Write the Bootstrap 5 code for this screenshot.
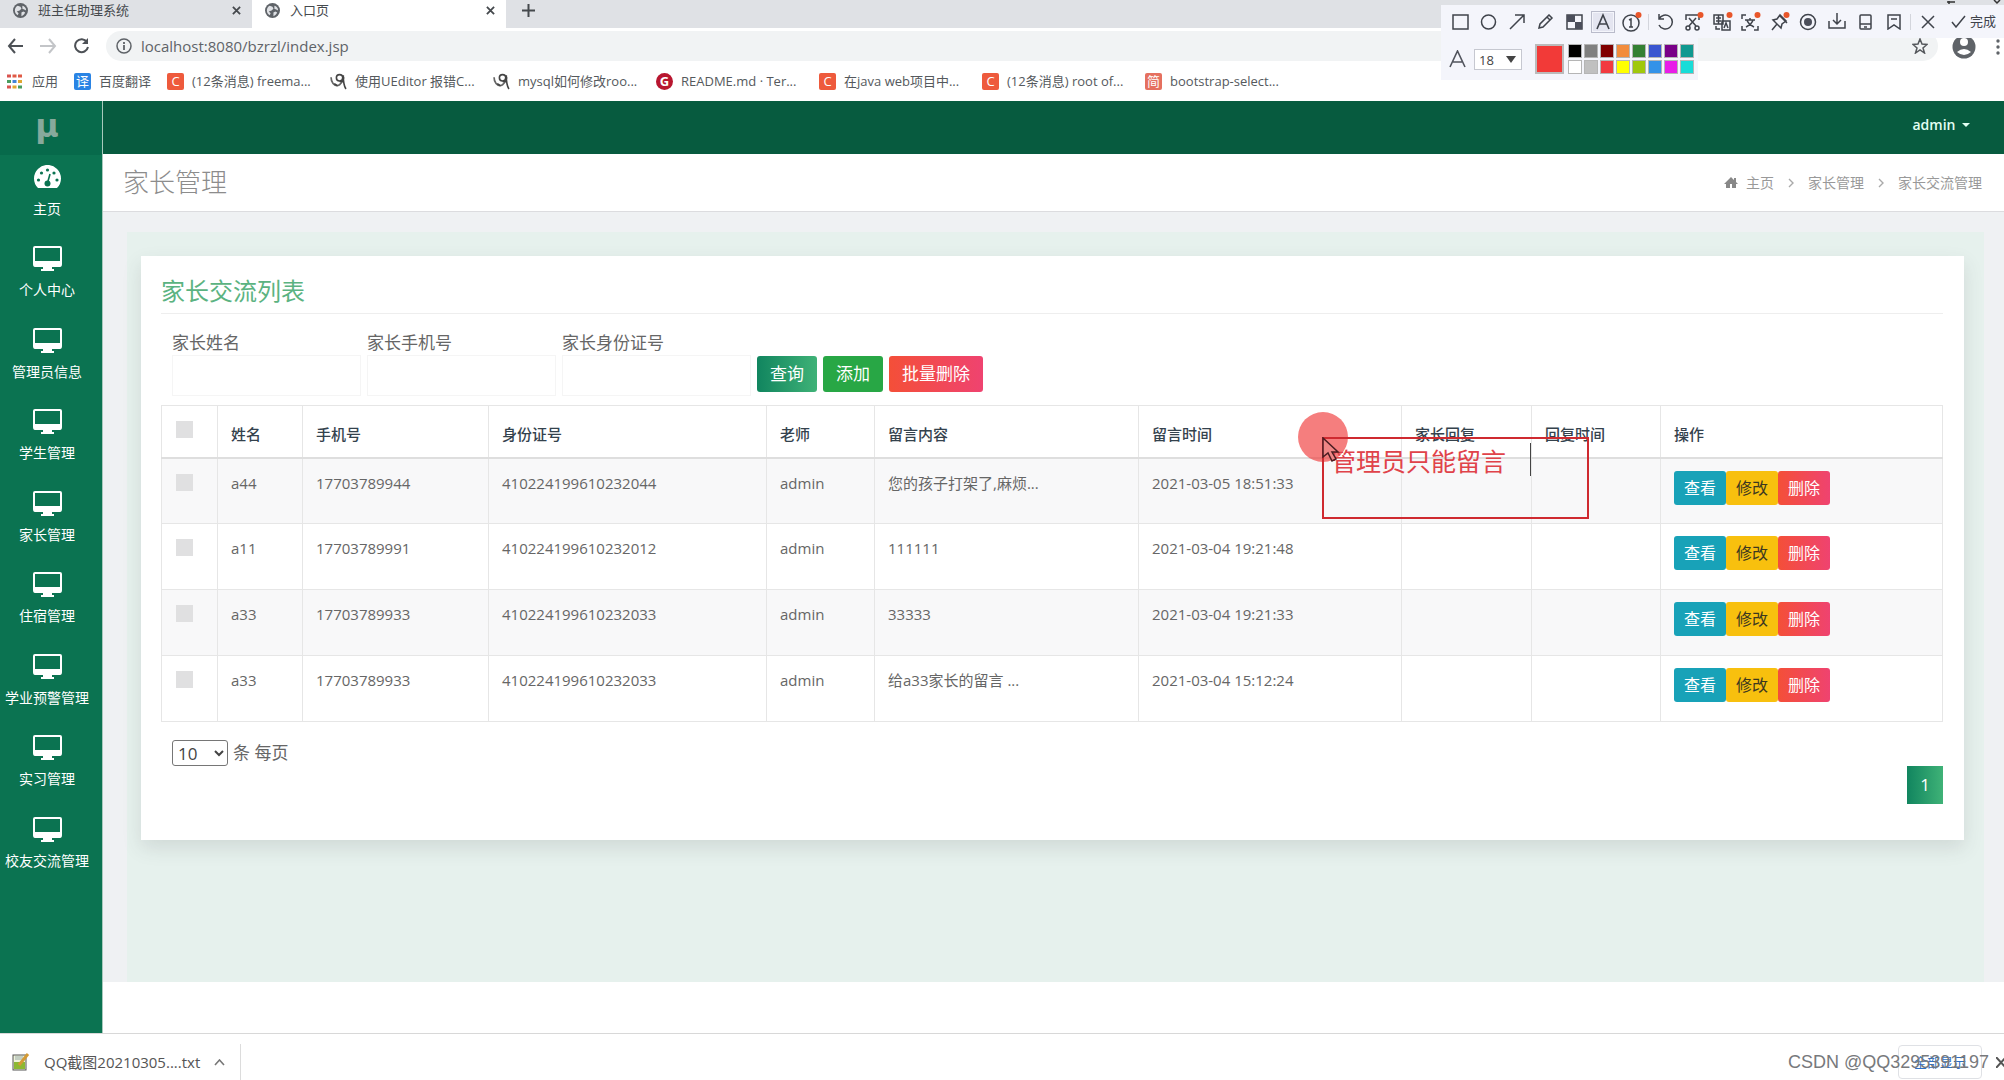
<!DOCTYPE html>
<html lang="zh-CN">
<head>
<meta charset="utf-8">
<meta name="viewport" content="width=device-width, initial-scale=1">
<title>入口页</title>
<link href="https://cdn.jsdelivr.net/npm/bootstrap@5.3.0/dist/css/bootstrap.min.css" rel="stylesheet">
<style>
body{font-family:"Open Sans","Noto Sans CJK SC",sans-serif;font-size:15px;line-height:20px;color:#666;background:#fff;overflow-x:hidden}
a{color:inherit;text-decoration:none}
svg{display:block;flex:none}
button.plain{border:0;background:none;padding:0;color:inherit;line-height:1}
/* browser frame */
.tabstrip{height:28px;background:#dfe1e5;font-size:13px;color:#45494d}
.tab-item{height:28px;padding:0 11px 8px 13px;gap:10px}
.tab-one{width:252px}
.tab-two{width:254px;background:#fff}
.toolbar{height:37px;padding:0 0 2px 7px;gap:16px;color:#5f6368}
.omnibox{height:30px;background:#f1f3f4;border-radius:15px;padding:0 10px;margin-right:66px;gap:9px}
.omnibox input{border:0;background:none;padding:0;color:#5f6368;font-size:15px;outline:0}
.bookmarks{height:36px;padding:0 7px 4px;font-size:13px;color:#55595d;white-space:nowrap}
.bm{width:163px;gap:8px}
.apps{gap:10px}
.bm-icon{width:17px;height:17px;border-radius:2px;color:#fff;font-size:13px;line-height:17px;text-align:center;flex:none}
.bg-c{background:#ee5a3c}.bg-y{background:#2a84e4}.bg-j{background:#e5705f}
.bg-g{background:#b8162f;border-radius:50%;font-weight:700}
/* annotation palette */
.palette{position:absolute;top:5px;right:0;width:563px;color:#3f434b;z-index:5}
.tools{height:33px;background:#f4f5fb;padding-left:5px;font-size:13px}
.tool-grid{display:grid;justify-items:center;align-items:center;height:33px}
.g7{width:200px;grid-template-columns:repeat(7,1fr)}
.g9{width:257px;grid-template-columns:repeat(9,1fr)}
.tool-sep{width:1px;height:16px;background:#d3d5dc;margin:0 2px}
.picked{background:#e4e5f0;outline:1px solid #b9bbca;outline-offset:1px}
.colors{width:257px;height:42px;background:#f4f5fb;padding:0 4px 0 8px}
.size-pick{appearance:none;width:48px;height:21px;border:1px solid #c6c8d0;font-size:13px;padding:0 0 0 4px;color:#444;background:linear-gradient(#555,#555) no-repeat 0 0/0 0,#fff}
.size-box{position:relative}
.size-box svg{position:absolute;right:6px;top:7px;pointer-events:none}
.cur-color{width:30px;height:30px;background:#f23a38;border:2px solid #bbb;margin:0 4px 0 13px}
.swatches{display:grid;grid-template-columns:repeat(8,14px);gap:2px}
.swatches button{width:14px;height:14px;padding:0;border:1px solid #b5b5b5}
/* application */
.side{width:103px;flex:none;background:#0b7351;color:#fff;font-size:14px;border-right:1px solid #a8c9bc}
.brand{height:54px;padding-right:8px;background:#076a4b;color:#87a99c;font:700 32px/50px "DejaVu Sans",sans-serif;text-align:center}
.side-nav{min-height:733px;padding-right:8px}
.side-nav a{flex:1 1 0;display:flex;flex-direction:column;align-items:center;gap:9px;padding-top:10px;white-space:nowrap}
.app-head{height:53px;background:#075b3f;color:#e3fff3;padding:0 34px 6px}
.app-head button{font-size:14px;font-weight:600;display:flex;align-items:center;gap:3px}
.title-bar{height:58px;background:#fff;border-bottom:1px solid #dcdcdf;padding:0 22px 0 20px}
.title-bar h1{font-size:26px;font-weight:300;margin:0;color:#8c8c8c}
.crumbs{font-size:14px;color:#999;gap:14px}
.stage{background:#eff1f3;padding:20px 20px 0 24px}
.mint{background:#e6f1ed;padding:24px 20px 142px 14px}
.panel{background:#fff;padding:22px 21px 36px 20px;box-shadow:0 8px 18px rgba(60,60,70,.13)}
.panel h2{font-size:24px;line-height:26px;font-weight:400;color:#5bb381;margin:0;padding-bottom:9px;border-bottom:1px solid #eee}
.search{padding:19px 11px 9px;gap:6px}
.search label{display:block;font-size:17px;line-height:20px;margin-bottom:2px}
.search .form-control{width:189px;height:41px;border:1px solid #f5f5f5;border-radius:0}
.act{font-size:17px;line-height:22px;color:#fff;padding:6px 12px;border-radius:3px;border:1px solid transparent;background-origin:border-box}
.act:hover{color:#fff}
.grad-green{background-image:linear-gradient(90deg,#11855f,#3fb277)}
.grad-red{background-image:linear-gradient(90deg,#f44f38,#ef4370);background-origin:border-box}
.list{table-layout:fixed;margin:0;color:#666;border-color:#e6e6e6;--bs-table-color:#666;--bs-table-striped-color:#666;--bs-table-striped-bg:#f8f8f9}
.list th{height:52px;padding:18px 13px 12px;font-weight:500;line-height:20px;color:#34424d;border-bottom:2px solid #dedede;vertical-align:top}
.list td{height:66px;padding:12px 13px 0;line-height:24px;white-space:nowrap}
.list .pick{padding:15px 12px 0}
.tick{appearance:none;display:block;width:17px;height:17px;margin:0 2px;background:#e0e0e1}
.row-act{font-size:16px;line-height:22px;padding:5px 9px;border-radius:3px;border:1px solid transparent;color:#fff}
.bg-view{background:#18a2b8}.bg-edit{background:#f8c00e;color:#3c3820}
.page-size{padding:18px 11px 0;font-size:17px;line-height:26px;gap:5px}
.page-size select{width:56px;height:26px;font-size:17px;border:1px solid #767676;border-radius:3px;background:#fff;color:#444;padding:0 0 0 1px}
.page-now{width:36px;height:38px;color:#fff;font-size:17px;border:0}
.app-foot{height:51px}
.downloads{height:47px;border-top:1px solid #d8d8d8;padding-left:12px;color:#555;position:relative;padding-top:10px}
.dl-item{width:229px;gap:14px;border-right:1px solid #dcdcdc;height:37px;white-space:nowrap}
.show-all{width:84px;height:34px;border:1px solid #dfe1e5;border-radius:4px;background:#fff;color:#2f6fc4;font-size:13px;padding:0;margin-right:14px}
/* notes drawn over the screen */
.halo{position:absolute;left:1298px;top:412px;width:50px;height:50px;border-radius:50%;background:rgba(240,65,65,.68)}
.note{position:absolute;left:1322px;top:437px;width:267px;height:82px;border:2px solid #cf2a30;color:#e0434a;font-size:25px;line-height:30px;padding:7px;white-space:nowrap}
.note-caret{position:absolute;left:1530px;top:443px;width:1px;height:33px;background:#444}
.pointer{position:absolute;left:1322px;top:437px}
.watermark{position:absolute;right:15px;top:17px;font:18px/22px "Liberation Sans",sans-serif;color:#77797c}
</style>
</head>
<body class="position-relative d-flex flex-column min-vh-100">
<svg width="0" height="0" class="position-absolute" aria-hidden="true">
<symbol id="globe" viewBox="0 0 16 16"><circle cx="8" cy="8" r="8" fill="#5f6368"/><path d="M2 8c0-2 1-4 3-5l3 1 1 2-2 2-3 1 2 2-1 2C3 12 2 10 2 8zm8-5c2 .5 4 2 4 5l-2-1-2-1zm-1 7l2-1 2 1c-1 2-2 3-4 4z" fill="#dfe1e5"/></symbol>
<symbol id="screen" viewBox="0 0 29 25"><path fill="currentColor" fill-rule="evenodd" d="M2 0h25q2 0 2 2v16q0 3-2 3h-8v2h2v2H8v-2h2v-2H2q-2 0-2-3V2q0-2 2-2zm0 2v13h25V2z"/></symbol>
<symbol id="cross" viewBox="0 0 10 10"><path d="M1 1l8 8M9 1L1 9" stroke="currentColor" stroke-width="2" fill="none"/></symbol>
<symbol id="hair" viewBox="0 0 16 16"><path d="M1 4c0 5 3 8 6 8 3-1 5-4 6-8" fill="none" stroke="#666" stroke-width="1.600"/><circle cx="9" cy="4.500" r="3" fill="none" stroke="#444" stroke-width="1.500"/><path d="M12.500 2c0 5 .5 10 2.500 13M7 12l-3-2M9 8h4" fill="none" stroke="#444" stroke-width="1.500"/></symbol>
<symbol id="chev" viewBox="0 0 6 10"><path d="M1 1l4 4-4 4" fill="none" stroke="#aaa" stroke-width="1.4"/></symbol>
</svg>

<header>
<div class="tabstrip d-flex">
 <div class="tab-item tab-one d-flex align-items-center"><svg width="15" height="15"><use href="#globe"/></svg><span class="flex-fill">班主任助理系统</span><button class="plain" aria-label="关闭标签"><svg width="9" height="9"><use href="#cross"/></svg></button></div>
 <div class="tab-item tab-two d-flex align-items-center"><svg width="15" height="15"><use href="#globe"/></svg><span class="flex-fill">入口页</span><button class="plain" aria-label="关闭标签"><svg width="9" height="9"><use href="#cross"/></svg></button></div>
 <button class="plain px-3 pb-2" aria-label="新标签页"><svg width="13" height="13"><path d="M6.500 0v13M0 6.500h13" stroke="#45494d" stroke-width="2"/></svg></button>
</div>
<div class="toolbar d-flex align-items-center">
 <button class="plain" aria-label="后退"><svg width="17" height="16" fill="none" stroke="#4d5156" stroke-width="2"><path d="M16 8H2M8 1L2 8l6 7"/></svg></button>
 <button class="plain" aria-label="前进"><svg width="17" height="16" fill="none" stroke="#c3c5c8" stroke-width="2"><path d="M0 8h14M9 1l6 7-6 7"/></svg></button>
 <button class="plain" aria-label="刷新"><svg width="17" height="17" fill="none" stroke="#4d5156" stroke-width="2"><path d="M14 5a6.500 6.500 0 1 0 1 5"/><path d="M15 1v6H9z" fill="#4d5156" stroke="none"/></svg></button>
 <div class="omnibox d-flex align-items-center flex-fill"><svg width="16" height="16"><circle cx="8" cy="8" r="7" fill="none" stroke="#5f6368" stroke-width="1.500"/><path d="M8 7v5M8 4v2" stroke="#5f6368" stroke-width="1.800"/></svg><input class="flex-fill" type="text" aria-label="地址" value="localhost:8080/bzrzl/index.jsp">
 <svg width="16" height="16"><path d="M8 1l2 5 5 .5-4 3.500 1.500 5L8 12l-4.500 3L5 10 1 6.500 6 6z" fill="none" stroke="#55585c" stroke-width="1.500"/></svg></div>
</div>
<nav class="bookmarks d-flex align-items-center" aria-label="书签">
 <a href="#" class="apps d-flex align-items-center me-3"><svg width="15" height="15"><path d="M0 2h4M0 13h4" stroke="#d9534f" stroke-width="3"/><path d="M5.500 2h4M11 2h4" stroke="#e05a45" stroke-width="3"/><path d="M0 7.500h4M11 13h4" stroke="#4a9d5f" stroke-width="3"/><path d="M5.500 7.500h4" stroke="#4285d8" stroke-width="3"/><path d="M11 7.500h4M5.500 13h4" stroke="#e0a730" stroke-width="3"/></svg>应用</a>
 <a href="#" class="d-flex align-items-center gap-2 me-3"><span class="bm-icon bg-y">译</span>百度翻译</a>
 <a href="#" class="bm d-flex align-items-center"><span class="bm-icon bg-c">C</span>(12条消息) freema...</a>
 <a href="#" class="bm d-flex align-items-center"><svg width="17" height="17"><use href="#hair"/></svg>使用UEditor 报错C...</a>
 <a href="#" class="bm d-flex align-items-center"><svg width="17" height="17"><use href="#hair"/></svg>mysql如何修改roo...</a>
 <a href="#" class="bm d-flex align-items-center"><span class="bm-icon bg-g">G</span>README.md · Ter...</a>
 <a href="#" class="bm d-flex align-items-center"><span class="bm-icon bg-c">C</span>在java web项目中...</a>
 <a href="#" class="bm d-flex align-items-center"><span class="bm-icon bg-c">C</span>(12条消息) root of...</a>
 <a href="#" class="bm d-flex align-items-center"><span class="bm-icon bg-j">简</span>bootstrap-select...</a>
</nav>
</header>

<div class="d-flex flex-fill">
<aside class="side">
 <div class="brand">µ</div>
 <nav class="side-nav d-flex flex-column">
  <a href="#"><svg width="27" height="25" viewBox="0 0 27 25"><path fill="#fff" d="M4 23a13.500 13.500 0 1 1 19 0z"/><g fill="#0b7351"><circle cx="4.500" cy="15" r="1.600"/><circle cx="7.500" cy="8" r="1.600"/><circle cx="13.500" cy="5" r="1.600"/><circle cx="20" cy="8" r="1.600"/><circle cx="23" cy="15" r="1.600"/><circle cx="13.500" cy="18.500" r="3"/></g><path d="M13.500 18L16 9" stroke="#0b7351" stroke-width="1.600"/></svg>主页</a>
  <a href="#"><svg width="29" height="25"><use href="#screen"/></svg>个人中心</a>
  <a href="#"><svg width="29" height="25"><use href="#screen"/></svg>管理员信息</a>
  <a href="#"><svg width="29" height="25"><use href="#screen"/></svg>学生管理</a>
  <a href="#"><svg width="29" height="25"><use href="#screen"/></svg>家长管理</a>
  <a href="#"><svg width="29" height="25"><use href="#screen"/></svg>住宿管理</a>
  <a href="#"><svg width="29" height="25"><use href="#screen"/></svg>学业预警管理</a>
  <a href="#"><svg width="29" height="25"><use href="#screen"/></svg>实习管理</a>
  <a href="#"><svg width="29" height="25"><use href="#screen"/></svg>校友交流管理</a>
 </nav>
</aside>
<div class="flex-fill d-flex flex-column">
 <div class="app-head d-flex justify-content-end align-items-center"><button class="plain dropdown-toggle">admin</button></div>
 <div class="title-bar d-flex justify-content-between align-items-center">
  <h1>家长管理</h1>
  <nav class="crumbs d-flex align-items-center" aria-label="breadcrumb"><a href="#" class="d-flex align-items-center gap-2"><svg width="14" height="11"><path d="M7 0l3 3V1h2v4l2 2h-2v4H8V7H6v4H2V7H0z" fill="#888"/></svg>主页</a><svg width="6" height="10"><use href="#chev"/></svg><a href="#">家长管理</a><svg width="6" height="10"><use href="#chev"/></svg><a href="#">家长交流管理</a></nav>
 </div>
 <main class="stage flex-fill">
 <div class="mint h-100"><section class="panel">
  <h2>家长交流列表</h2>
  <form class="search d-flex align-items-end">
   <div><label for="pn">家长姓名</label><input id="pn" class="form-control" type="text"></div>
   <div><label for="pp">家长手机号</label><input id="pp" class="form-control" type="text"></div>
   <div><label for="pi">家长身份证号</label><input id="pi" class="form-control" type="text"></div>
   <div class="d-flex pb-1" style="gap:6px"><button type="button" class="btn act grad-green">查询</button><button type="button" class="btn btn-success act" style="--bs-btn-bg:#28a745">添加</button><button type="button" class="btn act grad-red">批量删除</button></div>
  </form>
  <table class="table table-bordered table-striped list">
   <colgroup><col style="width:56px"><col style="width:85px"><col style="width:186px"><col style="width:278px"><col style="width:108px"><col style="width:264px"><col style="width:263px"><col style="width:130px"><col style="width:129px"><col></colgroup>
   <thead><tr><th class="pick"><input class="tick" type="checkbox" aria-label="全选"></th><th>姓名</th><th>手机号</th><th>身份证号</th><th>老师</th><th>留言内容</th><th>留言时间</th><th>家长回复</th><th>回复时间</th><th>操作</th></tr></thead>
   <tbody>
   <tr><td class="pick"><input class="tick" type="checkbox" aria-label="选择 1"></td><td>a44</td><td>17703789944</td><td>410224199610232044</td><td>admin</td><td>您的孩子打架了,麻烦...</td><td>2021-03-05 18:51:33</td><td></td><td></td><td><div class="d-flex"><button class="row-act bg-view">查看</button><button class="row-act bg-edit">修改</button><button class="row-act grad-red">删除</button></div></td></tr>
   <tr><td class="pick"><input class="tick" type="checkbox" aria-label="选择 2"></td><td>a11</td><td>17703789991</td><td>410224199610232012</td><td>admin</td><td>111111</td><td>2021-03-04 19:21:48</td><td></td><td></td><td><div class="d-flex"><button class="row-act bg-view">查看</button><button class="row-act bg-edit">修改</button><button class="row-act grad-red">删除</button></div></td></tr>
   <tr><td class="pick"><input class="tick" type="checkbox" aria-label="选择 3"></td><td>a33</td><td>17703789933</td><td>410224199610232033</td><td>admin</td><td>33333</td><td>2021-03-04 19:21:33</td><td></td><td></td><td><div class="d-flex"><button class="row-act bg-view">查看</button><button class="row-act bg-edit">修改</button><button class="row-act grad-red">删除</button></div></td></tr>
   <tr><td class="pick"><input class="tick" type="checkbox" aria-label="选择 4"></td><td>a33</td><td>17703789933</td><td>410224199610232033</td><td>admin</td><td>给a33家长的留言 ...</td><td>2021-03-04 15:12:24</td><td></td><td></td><td><div class="d-flex"><button class="row-act bg-view">查看</button><button class="row-act bg-edit">修改</button><button class="row-act grad-red">删除</button></div></td></tr>
   </tbody>
  </table>
  <div class="page-size d-flex align-items-center"><select id="ps" aria-label="每页条数"><option>10</option></select><label for="ps">条 每页</label></div>
  <div class="d-flex justify-content-end"><button class="page-now grad-green">1</button></div>
 </section></div>
 </main>
 <footer class="app-foot"></footer>
</div>
</div>

<div class="downloads d-flex align-items-center">
 <div class="dl-item d-flex align-items-center"><svg width="18" height="18"><rect x="1" y="2" width="13" height="15" fill="#eef3da" stroke="#555"/><path d="M2 9h11v7H2z" fill="#8cb832"/><path d="M3 4h8M3 6h8" stroke="#9aa"/><path d="M7 12l9-11" stroke="#d49a35" stroke-width="3"/></svg><span class="flex-fill">QQ截图20210305....txt</span><button class="plain me-3 pe-1" aria-label="更多"><svg width="11" height="7"><path d="M1 6l4.500-5L10 6" fill="none" stroke="#777" stroke-width="1.600"/></svg></button></div>
 <button class="show-all ms-auto">全部显示</button><button class="plain" aria-label="关闭"><svg width="8" height="11"><path d="M0 0l10 11M0 11L10 0" stroke="#555" stroke-width="2"/></svg></button>
 <span class="watermark">CSDN @QQ3295391197</span>
</div>

<!-- window controls, profile and menu -->
<svg class="position-absolute top-0 end-0" width="70" height="66"><path d="M13 2h8M15 4V1M60 0l3 3 3-3" stroke="#333" stroke-width="1.500" fill="none"/><circle cx="30" cy="47" r="11.500" fill="#5f6368"/><circle cx="30" cy="42" r="4" fill="#fff"/><path d="M23 52q7-6 14 0-7 6-14 0" fill="#fff"/><g fill="#5f6368"><circle cx="64" cy="41" r="1.700"/><circle cx="64" cy="47" r="1.700"/><circle cx="64" cy="53" r="1.700"/></g></svg>

<div class="palette">
 <div class="tools d-flex align-items-center">
  <div class="tool-grid g7">
   <svg width="17" height="16" fill="none" stroke="#3f434b" stroke-width="1.500"><rect x="1" y="1" width="15" height="14"/></svg>
   <svg width="17" height="16" fill="none" stroke="#3f434b" stroke-width="1.500"><circle cx="8.500" cy="8" r="7"/></svg>
   <svg width="17" height="16" fill="none" stroke="#3f434b" stroke-width="1.500"><path d="M1 15L15 1M6 1h9v8"/></svg>
   <svg width="17" height="16" fill="none" stroke="#3f434b" stroke-width="1.500"><path d="M2 14l1-4 9-9 3 3-9 9zM10 3l3 3"/></svg>
   <svg width="17" height="16"><rect x="1" y="1" width="15" height="14" fill="none" stroke="#3f434b" stroke-width="1.500"/><path d="M1 1h8v7H1zM9 8h7v7H9z" fill="#4b4e5a"/></svg>
   <svg class="picked" width="20" height="18" fill="none" stroke="#3f434b" stroke-width="1.600"><path d="M4 16L10 2l6 14M6 11h8"/></svg>
   <svg width="21" height="22" fill="none" stroke="#3f434b" stroke-width="1.500"><circle cx="10" cy="12" r="8"/><path d="M8 9l2-1v8M8 16h4"/><circle cx="17.500" cy="4" r="3" fill="#e8562a" stroke="none"/></svg>
  </div>
  <span class="tool-sep"></span>
  <div class="tool-grid g9">
   <svg width="17" height="17" fill="none" stroke="#3f434b" stroke-width="1.500"><path d="M2 1v5h5M2 6a7 7 0 1 1 0 6"/></svg>
   <svg width="21" height="22" fill="none" stroke="#3f434b" stroke-width="1.500"><path d="M3 9V4h13v5M6 7l7 8M13 7l-7 8"/><circle cx="5" cy="17" r="2"/><circle cx="14" cy="17" r="2"/><circle cx="17.500" cy="4" r="3" fill="#e8562a" stroke="none"/></svg>
   <svg width="21" height="22" fill="none" stroke="#3f434b" stroke-width="1.500"><path d="M2 4h9v9H2zM4 7h5M4 10h5M6.500 4v9M10 10h8v9h-8zM12 17l2-5 2 5M4 15v3h4"/><circle cx="17.500" cy="4" r="3" fill="#e8562a" stroke="none"/></svg>
   <svg width="21" height="22" fill="none" stroke="#3f434b" stroke-width="1.500"><path d="M2 8V4h4M2 15v4h4M14 19h4v-4M5 9h10M10 7v2M6 16q6-3 7-7M7 9q1 4 7 7"/><circle cx="17.500" cy="4" r="3" fill="#e8562a" stroke="none"/></svg>
   <svg width="21" height="22" fill="none" stroke="#3f434b" stroke-width="1.500"><path d="M3 19l5-6M4 9l8 8 1-4 4-3-6-6-3 4zM10 4l8 8"/><circle cx="17.500" cy="4" r="3" fill="#e8562a" stroke="none"/></svg>
   <svg width="18" height="18"><circle cx="9" cy="9" r="7.500" fill="none" stroke="#3f434b" stroke-width="1.500"/><circle cx="9" cy="9" r="4" fill="#4b4e5a"/></svg>
   <svg width="18" height="17" fill="none" stroke="#3f434b" stroke-width="1.500"><path d="M1 8v7h16V8M9 0v11M5 7l4 4 4-4"/></svg>
   <svg width="13" height="16" fill="none" stroke="#3f434b" stroke-width="1.500"><rect x="1" y="1" width="11" height="14" rx="1"/><path d="M1 10h11M5 13h3"/></svg>
   <svg width="14" height="16" fill="none" stroke="#3f434b" stroke-width="1.500"><path d="M1 1h12v14l-6-4-6 4zM4 5h6"/></svg>
  </div>
  <span class="tool-sep"></span>
  <svg class="ms-2" width="14" height="14"><path d="M1 1l12 12M13 1L1 13" stroke="#3f434b" stroke-width="1.500"/></svg>
  <button class="plain d-flex align-items-center gap-1 ms-3"><svg width="15" height="13"><path d="M1 7l4 5L14 1" fill="none" stroke="#3f434b" stroke-width="1.500"/></svg><span>完成</span></button>
 </div>
 <div class="colors d-flex align-items-center">
  <svg class="me-2" width="17" height="18" fill="none" stroke="#50535c" stroke-width="1.600"><path d="M1 17L8.500 1 16 17M4 12h9"/></svg>
  <div class="size-box d-flex"><select class="size-pick" aria-label="字号"><option>18</option></select><svg width="10" height="7"><path d="M0 0h10L5 7z" fill="#444"/></svg></div>
  <span class="cur-color"></span>
  <div class="swatches"><button style="background:#000" aria-label="黑"></button><button style="background:#808080" aria-label="灰"></button><button style="background:#800000" aria-label="深红"></button><button style="background:#f28c3c" aria-label="橙"></button><button style="background:#348033" aria-label="绿"></button><button style="background:#3a55d0" aria-label="蓝"></button><button style="background:#780088" aria-label="紫"></button><button style="background:#109890" aria-label="青"></button><button style="background:#fff" aria-label="白"></button><button style="background:#c0c0c0" aria-label="银"></button><button style="background:#f23a40" aria-label="红"></button><button style="background:#ffff00" aria-label="黄"></button><button style="background:#a0c80c" aria-label="黄绿"></button><button style="background:#3492e8" aria-label="天蓝"></button><button style="background:#e81ce8" aria-label="洋红"></button><button style="background:#18dcd8" aria-label="水蓝"></button></div>
 </div>
</div>

<div class="halo"></div>
<div class="note">管理员只能留言</div>
<div class="note-caret"></div>
<svg class="pointer" width="18" height="26"><path d="M1 1v19l5-4 4 8 4-2-4-7h6z" fill="#ee8585" stroke="#4a1d22" stroke-width="1.500"/></svg>
<script src="https://cdn.jsdelivr.net/npm/bootstrap@5.3.0/dist/js/bootstrap.bundle.min.js"></script>
</body>
</html>
